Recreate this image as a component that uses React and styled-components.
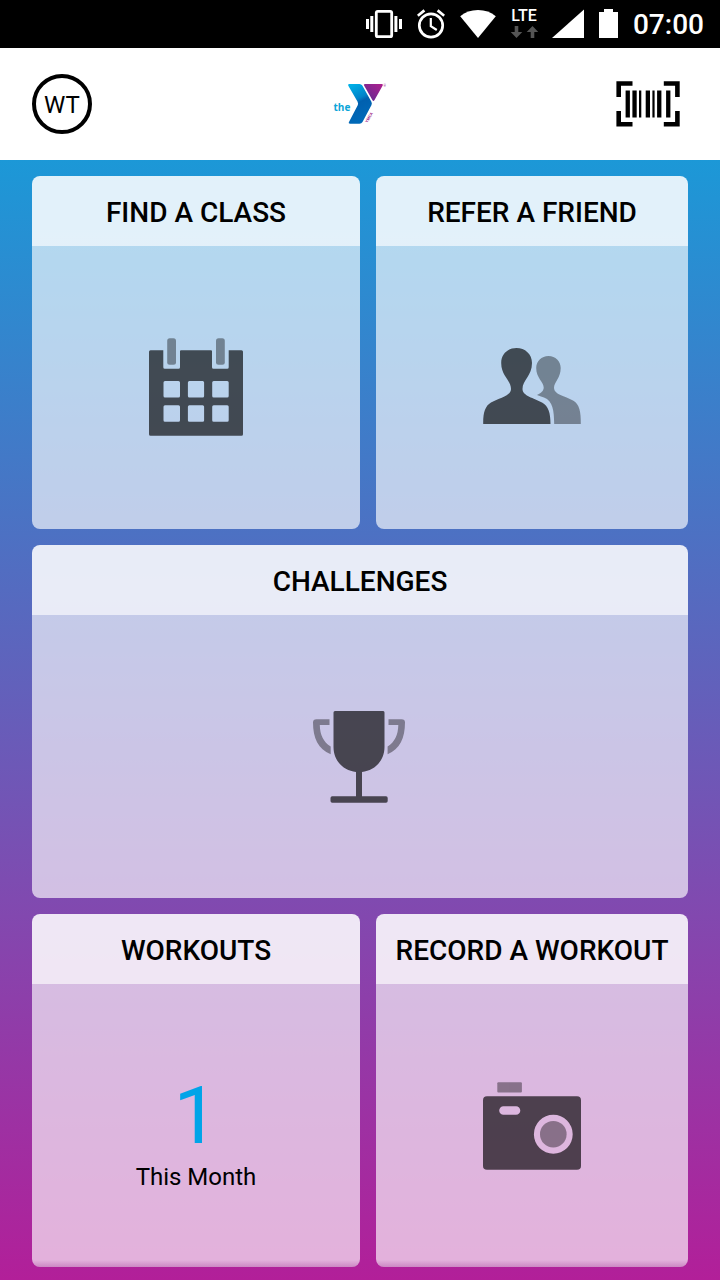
import React from 'react';
import styled, { createGlobalStyle } from 'styled-components';

const GlobalStyle = createGlobalStyle`
  * {
    box-sizing: border-box;
  }

  body {
    margin: 0;
    font-family: Roboto, sans-serif;
    color: #000;
  }

  button {
    font: inherit;
    color: inherit;
    border: none;
    padding: 0;
    background: none;
    cursor: pointer;
  }

  svg {
    display: block;
  }
`;

const Screen = styled.div`
  display: flex;
  flex-direction: column;
  min-height: 100vh;
`;

// Status bar
const StatusBar = styled.div`
  display: flex;
  align-items: center;
  justify-content: flex-end;
  gap: 15px;
  height: 48px;
  padding: 0 16px;
  background-color: #000;
  color: #fff;
`;

const Network = styled.div`
  display: flex;
  flex-direction: column;
  align-items: center;
  gap: 2px;
  width: 26px;
  padding-bottom: 2px;
  font-size: 16px;
  font-weight: 500;
  line-height: 16px;
`;

const Clock = styled.time`
  font-size: 28px;
  font-weight: 500;
  line-height: 32px;
  padding-top: 2px;
`;

// Header
const Header = styled.header`
  display: grid;
  grid-template-columns: 1fr auto 1fr;
  align-items: center;
  height: 112px;
  padding: 0 32px;
  background-color: #fff;
`;

const Avatar = styled.button`
  width: 60px;
  height: 60px;
  padding-top: 2px;
  border: 4px solid #000;
  border-radius: 50%;
  font-size: 24px;
`;

const ScanButton = styled.button`
  justify-self: end;
  padding: 0 8px;
`;

// Dashboard
const Dashboard = styled.main`
  flex: 1;
  display: grid;
  grid-template-columns: 50% 1fr;
  grid-auto-rows: minmax(320px, 1fr);
  gap: 16px;
  padding: 16px 32px 13px;
  background-image: linear-gradient(#1c98d7, #4f6fc2 35%, #804ab0 66%, #b21f99);
`;

const Card = styled.button`
  display: flex;
  flex-direction: column;
  grid-column: ${(props) => (props.$wide ? '1 / -1' : 'auto')};
  border-radius: 8px;
  overflow: hidden;
`;

const CardTitle = styled.span`
  display: flex;
  align-items: center;
  justify-content: center;
  width: 100%;
  height: 70px;
  padding-top: 2px;
  background-color: rgba(255, 255, 255, 0.87);
  font-size: 28px;
  font-weight: 500;
`;

const CardBody = styled.span`
  flex: 1;
  display: flex;
  flex-direction: column;
  align-items: center;
  justify-content: center;
  width: 100%;
  background-color: rgba(255, 255, 255, 0.65);
  background-image: ${(props) =>
    props.$shaded ? 'linear-gradient(to top, rgba(150, 40, 140, 0.3), rgba(150, 40, 140, 0) 7px)' : 'none'};
`;

const Count = styled.span`
  padding-top: 18px;
  font-size: 80px;
  line-height: 80px;
  color: #00a4e8;
`;

const CountLabel = styled.span`
  font-size: 24px;
  line-height: 34px;
  padding-top: 4px;
`;

function VibrateIcon() {
  return (
    <svg width="36" height="32" viewBox="367 8 36 32" fill="#fff">
      <rect x="377.3" y="11.3" width="15.4" height="25.4" rx="1.5" fill="none" stroke="#fff" strokeWidth="2.8" />
      <path d="M367 19h3v10h-3zM371.3 16h3v16h-3zM395.4 16h3v16h-3zM400 19h3v10h-3z" />
    </svg>
  );
}

function AlarmIcon() {
  return (
    <svg width="28" height="32" viewBox="417 8 28 32" fill="none" stroke="#fff" strokeWidth="2.7">
      <circle cx="431" cy="25.5" r="11.7" />
      <path d="M430.8 18v8.2l6 3.8" strokeWidth="2.2" />
      <path d="M417.8 15.8l6.6-5.4M437.6 10.4l6.6 5.4" />
    </svg>
  );
}

function WifiIcon() {
  return (
    <svg width="36" height="32" viewBox="459.5 8 36 32" fill="#fff">
      <path d="M477.5 38L459.7 16.2Q467 10 477.5 10T495.3 16.2z" />
    </svg>
  );
}

function DataArrows() {
  return (
    <svg width="28" height="12" viewBox="511 26 28 12" fill="#555">
      <path d="M515.7 26h3.6v6h4l-5.8 6-5.8-6h4zM531.7 38h3.6v-6h4l-5.8-6-5.8 6h4z" />
    </svg>
  );
}

function SignalIcon() {
  return (
    <svg width="32" height="32" viewBox="552 8 32 32" fill="#fff">
      <path d="M552 38h32V9.5z" />
    </svg>
  );
}

function BatteryIcon() {
  return (
    <svg width="19" height="32" viewBox="600 8 19 32" fill="#fff">
      <path d="M605 9h9v3h5v26h-19V12h5z" />
    </svg>
  );
}

function Logo() {
  return (
    <svg width="54" height="44" viewBox="333 82 54 44" role="img" aria-label="the YMCA">
      <defs>
        <linearGradient id="blueFold" x1="0" y1="0" x2="0.3" y2="1">
          <stop offset="0" stopColor="#00b5ea" />
          <stop offset="0.45" stopColor="#0083c9" />
          <stop offset="0.55" stopColor="#0060af" />
          <stop offset="1" stopColor="#0069b8" />
        </linearGradient>
        <linearGradient id="purpleFold" x1="0" y1="1" x2="1" y2="0">
          <stop offset="0" stopColor="#5a2c91" />
          <stop offset="1" stopColor="#b0208e" />
        </linearGradient>
      </defs>
      <text x="333.5" y="111" fontFamily="Open Sans, sans-serif" fontSize="10" fontWeight="700" fill="#0ba5d8">the</text>
      <path
        d="M349.3 84h10.2q1.8 0 2.8 1.6l9.1 16.2q.9 1.7 0 3.4l-8.9 16.7q-1 1.8-3 1.8h-9.3q-2.2 0-1.1-1.9l8.5-16.3q1-1.9 0-3.8l-9.3-16q-.9-1.7 1-1.7z"
        fill="url(#blueFold)"
      />
      <path d="M365 84h16.8q1.8 0 .9 1.6l-8.3 14.6q-1 1.6-1.9 0l-8.4-14.6q-.9-1.6.9-1.6z" fill="url(#purpleFold)" />
      <text
        transform="translate(367.5 123) rotate(-61)"
        fontSize="4"
        fontWeight="700"
        fill="#a3308f"
      >
        YMCA
      </text>
      <text x="383.4" y="87" fontSize="3" fill="#92278f">®</text>
    </svg>
  );
}

function BarcodeIcon() {
  return (
    <svg width="64" height="46" viewBox="616 81 64 46">
      <path
        d="M618.7 97V83.5h13.8M663.8 83.5h13.6V97M677.4 111v13.3h-13.6M632.5 124.3h-13.8V111"
        fill="none"
        stroke="#000"
        strokeWidth="4.6"
      />
      <path d="M625.6 90.5h4.3v27h-4.3zM632.4 90.5h4.3v27h-4.3zM639 90.5h2.3v27H639zM645.7 90.5h4.3v27h-4.3zM652.4 90.5h2.2v27h-2.2zM657.1 90.5h4.3v27h-4.3zM666.1 90.5h4.3v27h-4.3z" />
    </svg>
  );
}

function CalendarIcon() {
  return (
    <svg width="98" height="99" viewBox="147 338 98 99">
      <path
        fillRule="evenodd"
        opacity="0.65"
        d="M150.5 350.3H163.3V367.3q0 1.5 1.5 1.5H178.5q1.5 0 1.5-1.5V351.3q0-1 1-1H211q1 0 1 1V367.3q0 1.5 1.5 1.5H227.2q1.5 0 1.5-1.5V350.3H241.5q1.5 0 1.5 1.5V434.3q0 1.5-1.5 1.5H150.5q-1.5 0-1.5-1.5V351.8q0-1.5 1.5-1.5z
          M165 381h13.5q1.5 0 1.5 1.5V396q0 1.5-1.5 1.5H165q-1.5 0-1.5-1.5V382.5q0-1.5 1.5-1.5z
          M189.4 381h13.2q1.5 0 1.5 1.5V396q0 1.5-1.5 1.5H189.4q-1.5 0-1.5-1.5V382.5q0-1.5 1.5-1.5z
          M213.7 381h13.5q1.5 0 1.5 1.5V396q0 1.5-1.5 1.5H213.7q-1.5 0-1.5-1.5V382.5q0-1.5 1.5-1.5z
          M165 405.2h13.5q1.5 0 1.5 1.5V420.2q0 1.5-1.5 1.5H165q-1.5 0-1.5-1.5V406.7q0-1.5 1.5-1.5z
          M189.4 405.2h13.2q1.5 0 1.5 1.5V420.2q0 1.5-1.5 1.5H189.4q-1.5 0-1.5-1.5V406.7q0-1.5 1.5-1.5z
          M213.7 405.2h13.5q1.5 0 1.5 1.5V420.2q0 1.5-1.5 1.5H213.7q-1.5 0-1.5-1.5V406.7q0-1.5 1.5-1.5z"
      />
      <g opacity="0.38">
        <rect x="167.2" y="338.2" width="8.8" height="26.6" rx="2.5" />
        <rect x="216" y="338.2" width="8.8" height="26.6" rx="2.5" />
      </g>
    </svg>
  );
}

function FriendsIcon() {
  return (
    <svg width="98" height="99" viewBox="483 338 98 99">
      <path
        opacity="0.65"
        d="M483.2 424C483 413 485 406 491 402.5C499 398 511 396 511 389C511 380 501.2 376 501.2 363C501.2 354 508 348 516.5 348C525 348 532 354 532 363C532 376 522.5 380 522.5 389C522.5 396 534 398 542 402.5C548.5 406 550.5 413 550.5 424z"
      />
      <path
        opacity="0.38"
        d="M554.2 424C554 411 553 401 544 397.5Q540 396 537 395C541 393 543.7 391 543.7 387.5C543.7 382 536.2 378 536.2 368C536.2 361 541.5 356 548.5 356C555.5 356 560.7 361 560.7 368C560.7 378 554 382 554 388C554 394.5 565 396 573 400.5C579.5 404 581 412 580.8 424z"
      />
    </svg>
  );
}

function TrophyIcon() {
  return (
    <svg width="98" height="99" viewBox="311 707 98 99">
      <path
        opacity="0.65"
        d="M335 711H383.2Q384.5 711 384.5 712.5V747C384.5 761 374.5 770.5 362 772V796.2H386Q387.7 796.2 387.7 798V801Q387.7 802.8 386 802.8H332.2Q330.5 802.8 330.5 801V798Q330.5 796.2 332.2 796.2H356V772C343.5 770.5 333.5 761 333.5 747V712.5Q333.5 711 335 711z"
      />
      <path
        opacity="0.38"
        d="M329.5 719.2H316.5Q313 719.2 313 722.5C313 738 318 749 330.7 754.2V746.5C323.5 742 320 735 319.8 725H329.5zM388.5 719.2H401.5Q405 719.2 405 722.5C405 738 400 749 387.6 754.2V746.5C394.8 742 398.1 735 398.3 725H388.5z"
      />
    </svg>
  );
}

function CameraIcon() {
  return (
    <svg width="98" height="99" viewBox="483 1076 98 99">
      <path
        fillRule="evenodd"
        opacity="0.65"
        d="M487 1096.3H577Q581 1096.3 581 1100.3V1166Q581 1169.8 577 1169.8H487Q483 1169.8 483 1166V1100.3Q483 1096.3 487 1096.3z
          M503.5 1106.2a4.3 4.3 0 0 0 0 8.6H516a4.3 4.3 0 0 0 0-8.6z
          M533.9 1134.2a19.4 19.4 0 1 0 38.8 0a19.4 19.4 0 1 0-38.8 0z"
      />
      <g opacity="0.38">
        <rect x="497.3" y="1082.2" width="24.6" height="10.4" rx="1" />
        <circle cx="553.3" cy="1134.2" r="13.3" />
      </g>
    </svg>
  );
}

const cards = [
  { title: 'FIND A CLASS', content: <CalendarIcon /> },
  { title: 'REFER A FRIEND', content: <FriendsIcon /> },
  { title: 'CHALLENGES', content: <TrophyIcon />, wide: true },
  {
    title: 'WORKOUTS',
    content: (
      <>
        <Count>1</Count>
        <CountLabel>This Month</CountLabel>
      </>
    ),
    shaded: true,
  },
  { title: 'RECORD A WORKOUT', content: <CameraIcon />, shaded: true },
];

function App() {
  return (
    <Screen>
      <GlobalStyle />

      <StatusBar>
        <VibrateIcon />
        <AlarmIcon />
        <WifiIcon />
        <Network>
          LTE
          <DataArrows />
        </Network>
        <SignalIcon />
        <BatteryIcon />
        <Clock>07:00</Clock>
      </StatusBar>

      <Header>
        <Avatar>WT</Avatar>
        <Logo />
        <ScanButton aria-label="Scan barcode">
          <BarcodeIcon />
        </ScanButton>
      </Header>

      <Dashboard>
        {cards.map((card) => (
          <Card key={card.title} $wide={card.wide}>
            <CardTitle>{card.title}</CardTitle>
            <CardBody $shaded={card.shaded}>{card.content}</CardBody>
          </Card>
        ))}
      </Dashboard>
    </Screen>
  );
}

export default App;
